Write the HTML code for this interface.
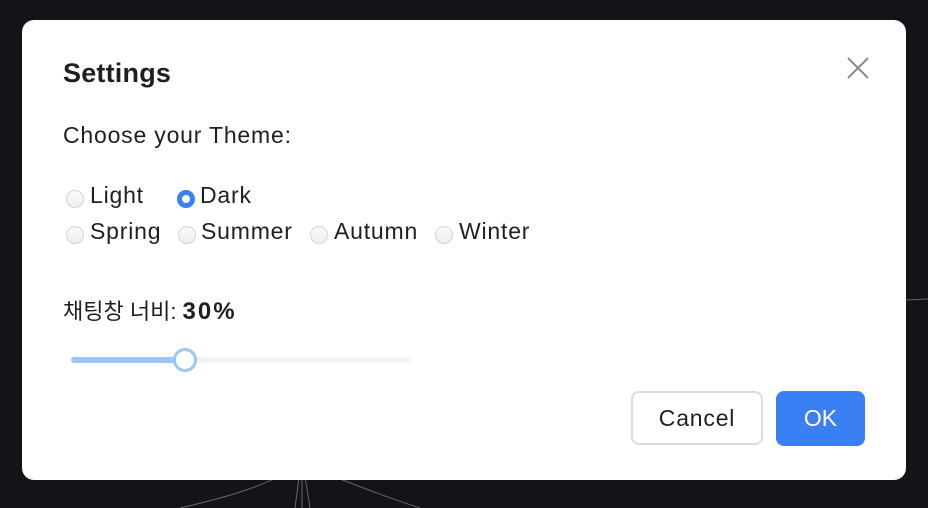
<!DOCTYPE html>
<html><head><meta charset="utf-8"><style>
body{margin:0;width:928px;height:508px;background:#131417;position:relative;overflow:hidden;font-family:"Liberation Sans","Noto Sans CJK KR",sans-serif;color:#1f1f1f}
.m{position:absolute;left:22px;top:20px;width:884px;height:460px;background:#fff;border-radius:12px}
.a{position:absolute;white-space:nowrap}
.r{position:absolute;width:18px;height:18px;border-radius:50%;border:1px solid #d4d4d4;box-sizing:border-box;background:linear-gradient(#fafafa,#eee)}
.t{font-size:23px;letter-spacing:0.8px}
</style></head><body>
<svg style="position:absolute;left:0;top:0" width="928" height="508">
<path d="M180 508 Q260 490 290 470" stroke="#666" fill="none" stroke-width="1"/>
<path d="M300 470 L295 508 M302 470 L302 508 M304 470 L310 508" stroke="#666" fill="none"/>
<path d="M330 475 Q380 495 420 508" stroke="#666" fill="none"/>
<path d="M906 300 L928 299" stroke="#666" fill="none"/>
</svg>
<div class="m">
<div class="a" style="left:41px;top:38px;font-size:27px;font-weight:bold;letter-spacing:0.2px">Settings</div>
<svg class="a" style="left:825px;top:37px" width="22" height="22"><path d="M1 1L21 21M21 1L1 21" stroke="#888" stroke-width="2"/></svg>
<div class="a t" style="left:41px;top:102px">Choose your Theme:</div>
<div class="r" style="left:44px;top:170px"></div><div class="a t" style="left:68px;top:162px">Light</div>
<div class="r" style="left:155px;top:170px;border:5px solid #3b7ff5;background:#fff"></div><div class="a t" style="left:178px;top:162px">Dark</div>
<div class="r" style="left:44px;top:206px"></div><div class="a t" style="left:68px;top:198px">Spring</div>
<div class="r" style="left:156px;top:206px"></div><div class="a t" style="left:179px;top:198px">Summer</div>
<div class="r" style="left:288px;top:206px"></div><div class="a t" style="left:312px;top:198px">Autumn</div>
<div class="r" style="left:413px;top:206px"></div><div class="a t" style="left:437px;top:198px">Winter</div>
<div class="a" style="left:41px;top:274px;font-size:22px">채팅창 너비: <b style="letter-spacing:2px;font-size:24px">30%</b></div>
<div class="a" style="left:49px;top:337px;width:340px;height:6px;border-radius:3px;background:#f3f3f3"></div>
<div class="a" style="left:49px;top:337px;width:114px;height:6px;border-radius:3px;background:#9cc6f7"></div>
<div class="a" style="left:151px;top:328px;width:24px;height:24px;box-sizing:border-box;border-radius:50%;border:3px solid #9cc6f7;background:#fff"></div>
<div class="a" style="left:609px;top:371px;width:132px;height:54px;box-sizing:border-box;border:2px solid #dcdcdc;border-radius:8px;font-size:23px;letter-spacing:0.8px;text-align:center;line-height:50px">Cancel</div>
<div class="a" style="left:754px;top:371px;width:89px;height:55px;background:#3b7ff5;border-radius:8px;color:#fff;font-size:23px;text-align:center;line-height:55px">OK</div>
</div>
</body></html>
